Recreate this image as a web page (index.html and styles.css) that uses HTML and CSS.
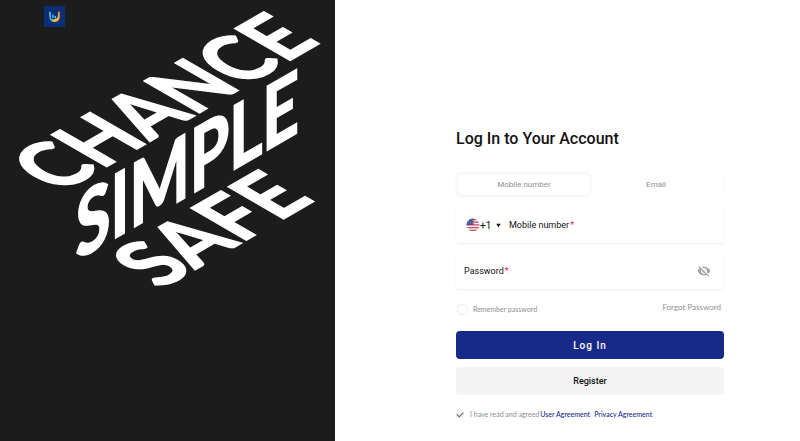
FILE: index.html
```html
<!DOCTYPE html>
<html lang="en">
<head>
<meta charset="utf-8">
<meta name="viewport" content="width=device-width, initial-scale=1">
<title>Log In</title>
<link rel="stylesheet" href="styles.css">
</head>
<body>
<div class="page">
  <aside class="hero">
    <svg class="hero-art" viewBox="0 0 335 300" role="img" aria-label="Chance, simple, safe">
      <defs>
        <linearGradient id="logo-blue" x1="0" y1="0" x2="0" y2="1">
          <stop offset="0" stop-color="#7fd8f2"/>
          <stop offset="1" stop-color="#2f9fd0"/>
        </linearGradient>
        <linearGradient id="logo-gold" x1="0" y1="0" x2="0" y2="1">
          <stop offset="0" stop-color="#e8893a"/>
          <stop offset="1" stop-color="#f2c242"/>
        </linearGradient>
      </defs>
      <rect x="44" y="6" width="21" height="21" fill="#0a2f74"/>
      <path d="M49.3 11.5 L50.8 12.3 V17 Q51 19.6 53 20.6 L51.8 21.6 Q49.3 20 49.3 16.5Z" fill="url(#logo-blue)"/>
      <path d="M52.3 14.5h1.4v3.4h-1.4z M54.6 16h1.4v2.2h-1.4z" fill="#5cc3e6"/>
      <path d="M58 12 L59.8 11.3 V16.8 Q59.6 21.8 54.6 22 Q52.6 22 51.4 21 Q55 20.8 56.2 19.4 Q58 18 58 12Z" fill="url(#logo-gold)"/>
      <path d="M51.5 18.8 Q54 20.6 57 17.6 Q56.4 21 53.6 21.2 Q52.2 20.4 51.5 18.8Z" fill="#f5cf58"/>
      <g class="hero-words">
        <text transform="matrix(.72 -.416 .866 .5 59.5 193.6)">CHANCE</text>
        <text transform="matrix(.725 -.419 0 1 75.5 261)">SIMPLE</text>
        <text transform="matrix(.745 -.43 .866 .5 160.5 289.6)">SAFE</text>
      </g>
    </svg>
  </aside>
  <main class="content">
    <form class="login">
      <h1 class="title">Log In to Your Account</h1>
      <div class="tabs">
        <button type="button" class="tab tab-active">Mobile number</button>
        <button type="button" class="tab">Email</button>
      </div>
      <div class="field">
        <svg class="flag" viewBox="0 0 14 14" aria-hidden="true">
          <clipPath id="round"><circle cx="7" cy="7" r="6.5"/></clipPath>
          <g clip-path="url(#round)">
            <rect width="14" height="14" fill="#f4eeee"/>
            <path d="M0 1.5h14M0 4.2h14M0 6.9h14M0 9.6h14M0 12.3h14" stroke="#c8506a" stroke-width="1.3"/>
            <rect width="7.5" height="7" fill="#4a5590"/>
            <path d="M2 3h5M2 5h5" stroke="#a5abcb" stroke-width=".6" stroke-dasharray="1 1"/>
          </g>
        </svg>
        <select class="code" aria-label="Country code"><option>+1</option></select>
        <svg class="caret" viewBox="0 0 6 5" aria-hidden="true"><path d="M.3.5h5.4L3 4.7z" fill="#111"/></svg>
        <label class="label" for="mobile">Mobile number<span class="star">*</span></label>
        <input class="input" id="mobile" type="tel">
      </div>
      <div class="field">
        <label class="label" for="password">Password<span class="star">*</span></label>
        <input class="input" id="password" type="password">
        <button type="button" class="eye" aria-label="Show password">
          <svg viewBox="0 0 24 24" aria-hidden="true"><path fill="#a3a3a3" d="M12 7c2.76 0 5 2.24 5 5 0 .65-.13 1.26-.36 1.83l2.92 2.92c1.51-1.26 2.7-2.89 3.43-4.75-1.73-4.39-6-7.5-11-7.5-1.4 0-2.74.25-3.98.7l2.16 2.16C10.74 7.13 11.35 7 12 7zM2 4.27l2.28 2.28.46.46C3.08 8.3 1.78 10.02 1 12c1.73 4.39 6 7.5 11 7.5 1.55 0 3.03-.3 4.38-.84l.42.42L19.73 22 21 20.73 3.27 3 2 4.27zM7.53 9.8l1.55 1.55c-.05.21-.08.43-.08.65 0 1.66 1.34 3 3 3 .22 0 .44-.03.65-.08l1.55 1.55c-.67.33-1.41.53-2.2.53-2.76 0-5-2.24-5-5 0-.79.2-1.53.53-2.2zm4.31-.78l3.15 3.15.02-.16c0-1.66-1.34-3-3-3l-.17.01z"/></svg>
        </button>
      </div>
      <div class="options">
        <label class="remember"><input class="round-check" type="checkbox">Remember password</label>
        <a class="forgot" href="#">Forgot Password</a>
      </div>
      <button type="submit" class="button primary">Log In</button>
      <button type="button" class="button secondary">Register</button>
      <div class="agreement">
        <input class="check" id="agree" type="checkbox" checked>
        <label for="agree">I have read and agreed</label>
        <a href="#">User Agreement</a>
        <a class="privacy" href="#">Privacy Agreement</a>
      </div>
    </form>
  </main>
</div>
</body>
</html>
```
FILE: styles.css
```css
* { box-sizing: border-box; }

body {
  margin: 0;
  background: #fff;
  color: #111;
  font-family: Roboto, "Liberation Sans", sans-serif;
  font-size: 9px;
}

button, input, select {
  margin: 0;
  padding: 0;
  border: 0;
  background: none;
  color: inherit;
  font: inherit;
}

a { text-decoration: none; }

.page {
  display: grid;
  grid-template-columns: minmax(0, 335fr) minmax(0, 465fr);
  min-height: 100vh;
}

.hero { background: #1c1c1c; }

.hero-art {
  display: block;
  width: 100%;
  overflow: visible;
}

.hero-words {
  fill: #fff;
  stroke: #fff;
  stroke-width: 2px;
  font-family: Lato, sans-serif;
  font-size: 88px;
  font-weight: 700;
}

.content { padding: 128px 76px 16px 121px; }

.login {
  display: flex;
  flex-direction: column;
}

.title {
  margin: 0 0 22px;
  font-size: 16px;
  line-height: 22px;
  font-weight: 500;
}

.tabs {
  display: grid;
  grid-template-columns: 1fr 1fr;
  height: 25px;
  padding: 2px;
  margin-bottom: 10px;
  border-radius: 5px;
  box-shadow: 0 0 1px #e2e2e2;
}

.tab {
  border-radius: 5px;
  color: #8d8f94;
  font-size: 8px;
}

.tab-active { box-shadow: 0 0 3px #dcdcdc; }

.field {
  display: flex;
  align-items: center;
  height: 36px;
  margin-bottom: 10px;
  padding: 0 13px 0 8px;
  border-radius: 4px;
  box-shadow: 0 1px 2px #ececec;
}

.flag {
  width: 14px;
  height: 14px;
  margin-left: 2px;
}

.code {
  appearance: none;
  width: 16px;
  font-size: 10px;
}

.caret {
  width: 5px;
  height: 5px;
  margin-right: 8px;
}

.label { white-space: nowrap; }

.star {
  margin-left: 1px;
  color: #e0245e;
}

.input {
  flex: 1;
  width: 0;
  outline: 0;
}

.eye {
  width: 14px;
  height: 14px;
}

.eye svg { display: block; }

.options {
  display: flex;
  justify-content: space-between;
  height: 20px;
  margin-bottom: 12px;
  padding: 0 3px 0 1px;
  color: #8d8f94;
  font-family: Lato, "Liberation Sans", sans-serif;
  line-height: 16px;
}

.remember {
  display: flex;
  align-items: center;
  gap: 5px;
  font-size: 7px;
}

.round-check {
  appearance: none;
  width: 11px;
  height: 11px;
  border: 1px solid #ececec;
  border-radius: 50%;
}

.forgot {
  color: inherit;
  font-size: 8px;
}

.button {
  height: 28px;
  margin-bottom: 8px;
  border-radius: 4px;
}

.primary {
  background: #172a88;
  color: #fff;
  font-size: 10px;
  font-weight: 500;
  letter-spacing: 1px;
}

.secondary {
  background: #f4f4f4;
  font-weight: 500;
}

.agreement {
  display: flex;
  align-items: center;
  gap: 1px;
  margin-top: 6px;
  color: #8d8f94;
  font-family: Lato, "Liberation Sans", sans-serif;
  font-size: 7px;
  line-height: 10px;
}

.agreement a {
  color: #172a88;
  font-weight: 500;
}

.agreement .privacy { margin-left: 3px; }

.check {
  appearance: none;
  display: grid;
  place-items: center;
  width: 8px;
  height: 8px;
  margin-right: 5px;
  background: #f2f2f2;
}

.check:checked::before {
  content: "";
  width: 5px;
  height: 3px;
  border: solid #666;
  border-width: 0 0 1px 1px;
  transform: rotate(-45deg);
}
```
